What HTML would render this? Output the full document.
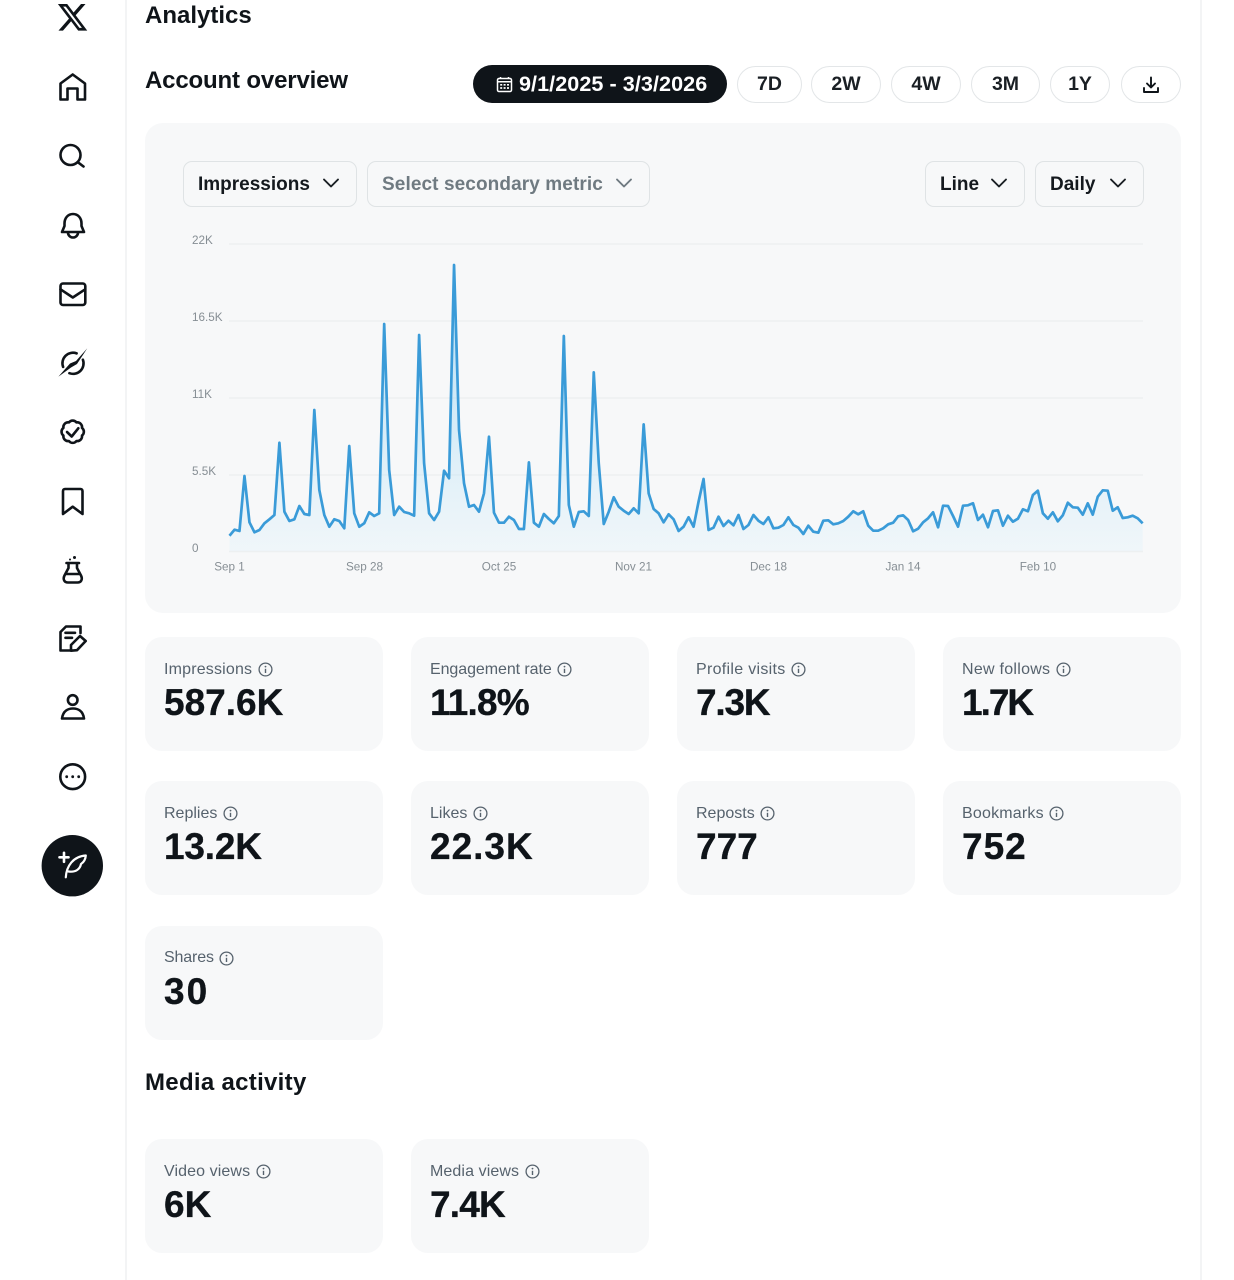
<!DOCTYPE html>
<html lang="en"><head><meta charset="utf-8"><title>Analytics</title>
<style>
*{box-sizing:border-box}
html,body{margin:0;padding:0;background:#fff}
body{width:1234px;height:1280px;position:relative;overflow:hidden;font-family:"Liberation Sans",sans-serif;color:#0f1419}
.abs{position:absolute}
.vl{position:absolute;top:0;bottom:0;width:1.5px;background:#f3f4f5}
h1,h2{position:absolute;margin:0;font-size:24px;font-weight:700;line-height:30px;left:145px;white-space:nowrap}
.pill{position:absolute;top:66px;height:37px;border:1.5px solid #e3e6e8;border-radius:19px;font-weight:700;font-size:19.5px;display:flex;align-items:center;justify-content:center;background:#fff;color:#1a1f24}
.pill.on{background:#0f1419;color:#fff;border:0;top:65px;height:38px;justify-content:flex-start;padding-left:46px;font-size:21.6px;letter-spacing:.05px}
.panel{position:absolute;left:145px;top:123px;width:1036px;height:490px;background:#f7f8f9;border-radius:18px}
.dd{position:absolute;top:161px;height:46px;border:1.5px solid #dfe3e5;border-radius:9px;font-weight:700;font-size:19px;line-height:45px;padding-left:14px;white-space:nowrap;color:#14191e}
.card{position:absolute;width:238px;height:114px;background:#f7f8f9;border-radius:17px}
.card .l{position:absolute;left:19px;top:21.5px;font-size:16px;line-height:22px;color:#56626d;white-space:nowrap;display:flex;align-items:center}
.card .l svg{margin-left:5.5px;flex:none}
.card .v{position:absolute;left:19px;top:44px;font-size:37px;font-weight:700;line-height:44px;color:#0f1419;white-space:nowrap;-webkit-text-stroke:.3px #0f1419}
</style></head>
<body>
<div class="vl" style="left:125px"></div>
<div class="vl" style="left:1200px"></div>

<svg class="abs" style="left:0;top:0" width="125" height="920" viewBox="0 0 125 920" fill="none" stroke="#0f1419" stroke-width="2.6" stroke-linejoin="round" stroke-linecap="round">
<path transform="translate(56.2 1) scale(1.36)" stroke="none" fill="#0f1419" d="M18.244 2.25h3.308l-7.227 8.26 8.502 11.24H16.17l-5.214-6.817L4.99 21.75H1.68l7.73-8.835L1.254 2.25H8.08l4.713 6.231zm-1.161 17.52h1.833L7.084 4.126H5.117z"/>
<path d="M60.5 99.5V83.5L72.7 74.5 85 83.5V99.5H77.5V88.5H67.5V99.5Z"/>
<circle cx="70.5" cy="155" r="10"/><path d="M77.8 162.2L83.5 166.5"/>
<path d="M62 232L64.5 226V223.5C64.5 218 68 214 73 214S81.5 218 81.5 223.5V226L84 232Z"/><path d="M68 232.5a5 5 0 0 0 10 0"/>
<rect x="60.5" y="283.5" width="24.8" height="21.5" rx="2.5"/><path d="M60.5 289.3L72.8 297.5 85.2 289.3"/>
<path d="M76.6 353.4A10.5 10.5 0 0 0 63.1 366.9M69.4 373.2A10.5 10.5 0 0 0 82.9 359.7"/>
<path stroke="none" fill="#0f1419" d="M58.3 376.7L70 363.5 76 361 87.3 348.3 77 364 71 367.5Z"/>
<path d="M82 427.9A4.8 4.8 0 0 1 82 435.5A4.8 4.8 0 0 1 76.5 441A4.8 4.8 0 0 1 68.9 441A4.8 4.8 0 0 1 63.4 435.5A4.8 4.8 0 0 1 63.4 427.9A4.8 4.8 0 0 1 68.9 422.4A4.8 4.8 0 0 1 76.5 422.4A4.8 4.8 0 0 1 82 427.9Z"/>
<path d="M67 432L71.7 436.5 78.3 428.3"/>
<path d="M63 514V491a2 2 0 0 1 2-2H80.5a2 2 0 0 1 2 2V514L72.7 506.7Z"/>
<path d="M66.5 563H79M68.5 563V568L64.5 575.5C62.5 579.5 64.5 582.5 68 582.5H77.5C81 582.5 83 579.5 81 575.5L77 568V563M65.5 574H80"/>
<circle cx="70" cy="559.5" r="1" fill="#0f1419" stroke="none"/><circle cx="74.5" cy="557.5" r="1.5" fill="#0f1419" stroke="none"/>
<path d="M70 650.5H60.5V632L66 626.5H80.5V633M65.5 632.8H75M65.5 637.8H72"/>
<path d="M71 650.7V645L80 636 85.7 641 77 650.2Z"/>
<circle cx="72.7" cy="700" r="4.8"/><path d="M62 718.5C63 711 68 708.5 73 708.5S83 711 84 718.5Z"/>
<circle cx="72.7" cy="776.7" r="12.4"/>
<circle cx="66.7" cy="776.7" r="1.4" fill="#0f1419" stroke="none"/><circle cx="72.7" cy="776.7" r="1.4" fill="#0f1419" stroke="none"/><circle cx="78.7" cy="776.7" r="1.4" fill="#0f1419" stroke="none"/>
<circle cx="72.3" cy="865.7" r="30.7" fill="#0f1419" stroke="none"/>
<path stroke="#fff" d="M64 852.8V861.8M59.5 857.3H68.5"/>
<path stroke="#fff" stroke-width="2.2" d="M65.8 877.3C66.5 866 73 856.5 85.8 855.5C85.5 859.5 84 862 81 864C80 869 76 872.5 68.5 871.5"/>
</svg>

<h1 style="top:1px">Analytics</h1>
<h2 style="top:66px;letter-spacing:-.16px">Account overview</h2>

<div class="pill on" style="left:473px;width:254px">9/1/2025 - 3/3/2026</div>
<svg class="abs" style="left:496px;top:76px" width="17" height="17" viewBox="0 0 17 17" fill="none" stroke="#fff" stroke-width="1.5"><rect x="1.5" y="2.5" width="14" height="13" rx="1.5"/><path d="M1.5 5.8H15.5M4.5 1V3M12.5 1V3"/><path stroke-width="1.7" d="M4.2 8.8H6.2M7.6 8.8H9.6M11 8.8H13M4.2 12H6.2M7.6 12H9.6M11 12H13"/></svg>
<div class="pill" style="left:737px;width:65px">7D</div>
<div class="pill" style="left:811px;width:70px">2W</div>
<div class="pill" style="left:891px;width:70px">4W</div>
<div class="pill" style="left:971px;width:69px">3M</div>
<div class="pill" style="left:1050px;width:60px">1Y</div>
<div class="pill" style="left:1121px;width:60px"><svg width="18" height="18" viewBox="0 0 18 18" fill="none" stroke="#0f1419" stroke-width="1.9" stroke-linecap="round" stroke-linejoin="round"><path d="M9 1.5V11M5 7.5L9 11.5 13 7.5M2 12V16H16V12"/></svg></div>

<div class="panel"></div>
<div class="dd" style="left:183px;width:174px">Impressions</div>
<div class="dd" style="left:367px;width:283px;color:#6f7a81;letter-spacing:.1px">Select secondary metric</div>
<div class="dd" style="left:925px;width:100px">Line</div>
<div class="dd" style="left:1035px;width:109px">Daily</div>

<svg class="abs" style="left:0;top:0" width="1234" height="620" viewBox="0 0 1234 620" fill="none">
<defs><linearGradient id="g" x1="0" y1="0" x2="0" y2="1"><stop offset="0" stop-color="#7cc8f2" stop-opacity=".6"/><stop offset=".6" stop-color="#a9dcf6" stop-opacity=".4"/><stop offset="1" stop-color="#d5eefb" stop-opacity=".22"/></linearGradient></defs>
<g stroke="#1a1f24" stroke-width="1.9" stroke-linecap="round" stroke-linejoin="round">
<path d="M324 179.5L331 186.5 338 179.5"/>
<path stroke="#6f7a81" d="M617 179.5L624 186.5 631 179.5"/>
<path d="M992 179.5L999 186.5 1006 179.5"/>
<path d="M1111 179.5L1118 186.5 1125 179.5"/>
</g>
<g stroke="#edf0f1" stroke-width="1.5">
<path d="M229 244H1143M229 321H1143M229 398H1143M229 475H1143M229 551.5H1143"/>
</g>
<g font-family="'Liberation Sans',sans-serif" font-size="11.7" fill="#868e94">
<text x="192" y="244">22K</text><text x="192" y="321">16.5K</text><text x="192" y="398">11K</text><text x="192" y="475">5.5K</text><text x="192" y="552">0</text>
<g text-anchor="middle">
<text x="229.5" y="570.5">Sep 1</text><text x="364.5" y="570.5">Sep 28</text><text x="499" y="570.5">Oct 25</text><text x="633.5" y="570.5">Nov 21</text><text x="768.5" y="570.5">Dec 18</text><text x="903" y="570.5">Jan 14</text><text x="1038" y="570.5">Feb 10</text>
</g></g>
<g transform="translate(229.5 0) scale(4.99 1)">
<polygon fill="url(#g)" points="0,551 0,535.7 1,529.7 2,531 3,476 4,522.3 5,532.3 6,530 7,523.3 8,519.3 9,515 10,442.7 11,511.7 12,521 13,519.3 14,506 15,514 16,515 17,410 18,490 19,515 20,526.7 21,519.3 22,521 23,528.3 24,446 25,513.3 26,526.7 27,523.3 28,512.3 29,516 30,513.3 31,324 32,470 33,515 34,506.7 35,512 36,513.3 37,515.7 38,335 39,463.3 40,513.3 41,520 42,511.7 43,470.7 44,478.3 45,265 46,430 47,483.3 48,506.7 49,505 50,511.7 51,493.3 52,436.7 53,512.7 54,522.7 55,522.7 56,516.7 57,520 58,529 59,529 60,462.3 61,522.7 62,526.7 63,514 64,519 65,523.3 66,516 67,336 68,505 69,526.7 70,512 71,511.3 72,516 73,372.3 74,463.3 75,524 76,511.7 77,497.3 78,506.7 79,510.7 80,514 81,508.3 82,513.3 83,424.3 84,493.3 85,509 86,513.3 87,522.3 88,514.3 89,519.3 90,531 91,526.7 92,517.3 93,526.7 94,501.7 95,479 96,530 97,527.7 98,516.7 99,526 100,520.7 101,525.3 102,515 103,529 104,525 105,515 106,520.7 107,524 108,517.3 109,528.3 110,527.7 111,525 112,517.3 113,525 114,527.7 115,534 116,525.7 117,531.7 118,532.7 119,520.7 120,520.3 121,524.3 122,523.3 123,521 124,516.7 125,511.3 126,514.3 127,511.3 128,525.7 129,530.7 130,530.7 131,528.3 132,524.3 133,522.7 134,516.3 135,515.3 136,520 137,531.3 138,528.7 139,522.3 140,518.3 141,512.3 142,527.3 143,505.7 144,506 145,516 146,526.7 147,505.7 148,505.3 149,503.3 150,520 151,514.7 152,527.3 153,511 154,510.3 155,525.7 156,515.7 157,521.7 158,518.7 159,509.3 160,511.3 161,495 162,490.7 163,513.3 164,518.7 165,512.3 166,521.3 167,515.3 168,502.7 169,507.3 170,507.7 171,514.7 172,503.3 173,514.7 174,496.7 175,490.3 176,490.7 177,510.7 178,507.3 179,518 180,517.3 181,515.7 182,518.3 183,523.3 183,551"/>
<polyline stroke="#3a9bd8" stroke-width="2.7" stroke-linejoin="round" vector-effect="non-scaling-stroke" points="0,535.7 1,529.7 2,531 3,476 4,522.3 5,532.3 6,530 7,523.3 8,519.3 9,515 10,442.7 11,511.7 12,521 13,519.3 14,506 15,514 16,515 17,410 18,490 19,515 20,526.7 21,519.3 22,521 23,528.3 24,446 25,513.3 26,526.7 27,523.3 28,512.3 29,516 30,513.3 31,324 32,470 33,515 34,506.7 35,512 36,513.3 37,515.7 38,335 39,463.3 40,513.3 41,520 42,511.7 43,470.7 44,478.3 45,265 46,430 47,483.3 48,506.7 49,505 50,511.7 51,493.3 52,436.7 53,512.7 54,522.7 55,522.7 56,516.7 57,520 58,529 59,529 60,462.3 61,522.7 62,526.7 63,514 64,519 65,523.3 66,516 67,336 68,505 69,526.7 70,512 71,511.3 72,516 73,372.3 74,463.3 75,524 76,511.7 77,497.3 78,506.7 79,510.7 80,514 81,508.3 82,513.3 83,424.3 84,493.3 85,509 86,513.3 87,522.3 88,514.3 89,519.3 90,531 91,526.7 92,517.3 93,526.7 94,501.7 95,479 96,530 97,527.7 98,516.7 99,526 100,520.7 101,525.3 102,515 103,529 104,525 105,515 106,520.7 107,524 108,517.3 109,528.3 110,527.7 111,525 112,517.3 113,525 114,527.7 115,534 116,525.7 117,531.7 118,532.7 119,520.7 120,520.3 121,524.3 122,523.3 123,521 124,516.7 125,511.3 126,514.3 127,511.3 128,525.7 129,530.7 130,530.7 131,528.3 132,524.3 133,522.7 134,516.3 135,515.3 136,520 137,531.3 138,528.7 139,522.3 140,518.3 141,512.3 142,527.3 143,505.7 144,506 145,516 146,526.7 147,505.7 148,505.3 149,503.3 150,520 151,514.7 152,527.3 153,511 154,510.3 155,525.7 156,515.7 157,521.7 158,518.7 159,509.3 160,511.3 161,495 162,490.7 163,513.3 164,518.7 165,512.3 166,521.3 167,515.3 168,502.7 169,507.3 170,507.7 171,514.7 172,503.3 173,514.7 174,496.7 175,490.3 176,490.7 177,510.7 178,507.3 179,518 180,517.3 181,515.7 182,518.3 183,523.3"/>
</g>
</svg>

<svg width="0" height="0" style="position:absolute"><defs><symbol id="i" viewBox="0 0 15 15"><circle cx="7.5" cy="7.5" r="6.4" fill="none" stroke="#56626d" stroke-width="1.3"/><path d="M7.5 6.8V11" stroke="#56626d" stroke-width="1.4" fill="none"/><circle cx="7.5" cy="4.6" r=".9" fill="#56626d"/></symbol></defs></svg>

<div class="card" style="left:145px;top:637px"><div class="l" style="letter-spacing:.18px">Impressions<svg width="15" height="15"><use href="#i"/></svg></div><div class="v">587.6K</div></div>
<div class="card" style="left:411px;top:637px"><div class="l" style="letter-spacing:-.07px">Engagement rate<svg width="15" height="15"><use href="#i"/></svg></div><div class="v" style="letter-spacing:-.8px">11.8%</div></div>
<div class="card" style="left:677px;top:637px"><div class="l" style="letter-spacing:.3px">Profile visits<svg width="15" height="15"><use href="#i"/></svg></div><div class="v" style="letter-spacing:-1.2px">7.3K</div></div>
<div class="card" style="left:943px;top:637px"><div class="l" style="letter-spacing:.27px">New follows<svg width="15" height="15"><use href="#i"/></svg></div><div class="v" style="letter-spacing:-2px">1.7K</div></div>

<div class="card" style="left:145px;top:781px"><div class="l">Replies<svg width="15" height="15"><use href="#i"/></svg></div><div class="v" style="letter-spacing:-.2px">13.2K</div></div>
<div class="card" style="left:411px;top:781px"><div class="l">Likes<svg width="15" height="15"><use href="#i"/></svg></div><div class="v" style="letter-spacing:1px">22.3K</div></div>
<div class="card" style="left:677px;top:781px"><div class="l">Reposts<svg width="15" height="15"><use href="#i"/></svg></div><div class="v">777</div></div>
<div class="card" style="left:943px;top:781px"><div class="l" style="letter-spacing:.2px">Bookmarks<svg width="15" height="15"><use href="#i"/></svg></div><div class="v" style="letter-spacing:1px">752</div></div>

<div class="card" style="left:145px;top:925.5px"><div class="l" style="letter-spacing:-.15px">Shares<svg width="15" height="15"><use href="#i"/></svg></div><div class="v" style="letter-spacing:2px">30</div></div>

<h2 style="top:1068px;letter-spacing:.3px">Media activity</h2>

<div class="card" style="left:145px;top:1139px"><div class="l" style="letter-spacing:.1px">Video views<svg width="15" height="15"><use href="#i"/></svg></div><div class="v">6K</div></div>
<div class="card" style="left:411px;top:1139px"><div class="l" style="letter-spacing:.1px">Media views<svg width="15" height="15"><use href="#i"/></svg></div><div class="v" style="letter-spacing:-.8px">7.4K</div></div>
</body></html>
